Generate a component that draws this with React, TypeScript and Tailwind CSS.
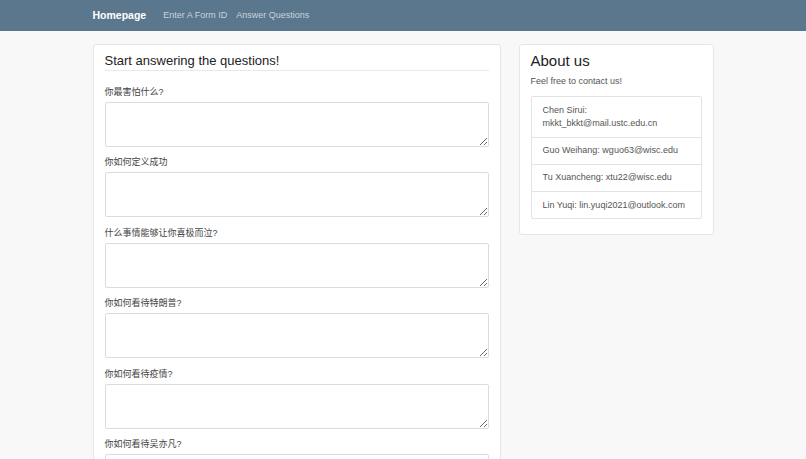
const questions = [
  "你最害怕什么?",
  "你如何定义成功",
  "什么事情能够让你喜极而泣?",
  "你如何看待特朗普?",
  "你如何看待疫情?",
  "你如何看待吴亦凡?",
];

const contacts = [
  "Chen Sirui: mkkt_bkkt@mail.ustc.edu.cn",
  "Guo Weihang: wguo63@wisc.edu",
  "Tu Xuancheng: xtu22@wisc.edu",
  "Lin Yuqi: lin.yuqi2021@outlook.com",
];

export default function App() {
  return (
    <main
      className="min-h-screen bg-[#f8f8f8] text-[#333]"
      style={{ fontFamily: '"Liberation Sans", "Noto Sans CJK SC", sans-serif' }}
    >
      {/* navbar */}
      <nav className="h-[31px] bg-[#5b778e]">
        <div className="w-[621px] mx-auto h-full flex items-center">
          <div className="text-[10.5px] font-bold text-white">Homepage</div>
          <ul className="flex ml-[17px] gap-[9px] text-[9px] text-[#c9d3dc]">
            <li>Enter A Form ID</li>
            <li>Answer Questions</li>
          </ul>
        </div>
      </nav>

      <div className="w-[621px] mx-auto flex items-start gap-[18px] pt-[13px]">
        {/* questions */}
        <div className="w-[408px] bg-white border border-[#e6e6e6] rounded-[3px] px-[11px] pt-[7px]">
          <h2 className="text-[13px] leading-[17px] pb-[1px] border-b border-[#e9e9e9] text-[#222]">
            Start answering the questions!
          </h2>
          <div className="pt-[14px]">
            {questions.map((q) => (
              <div key={q} className="pb-[8.4px]">
                <label className="block text-[9px] leading-[14px] mb-[3px] text-[#444]">{q}</label>
                <textarea className="block w-full h-[45px] border border-[#dcdcdc] rounded-[2px] bg-white" />
              </div>
            ))}
          </div>
        </div>

        {/* about */}
        <div className="w-[195px] bg-white border border-[#e6e6e6] rounded-[3px] px-[11px] pt-[6px] pb-[15px]">
          <h2 className="text-[15px] leading-[20px] font-medium text-[#222]">About us</h2>
          <p className="text-[9px] leading-[12px] mt-[4px] text-[#555]">Feel free to contact us!</p>
          <ul className="mt-[9px] border border-[#e3e3e3] rounded-[2px] text-[9px] leading-[13.25px] text-[#555]">
            {contacts.map((c, i) => (
              <li
                key={c}
                className={`px-[11px] py-[6.5px] ${i < contacts.length - 1 ? "border-b border-[#e3e3e3]" : ""}`}
              >
                {i === 0 ? (
                  <>
                    Chen Sirui:
                    <br />
                    mkkt_bkkt@mail.ustc.edu.cn
                  </>
                ) : (
                  c
                )}
              </li>
            ))}
          </ul>
        </div>
      </div>
    </main>
  );
}
